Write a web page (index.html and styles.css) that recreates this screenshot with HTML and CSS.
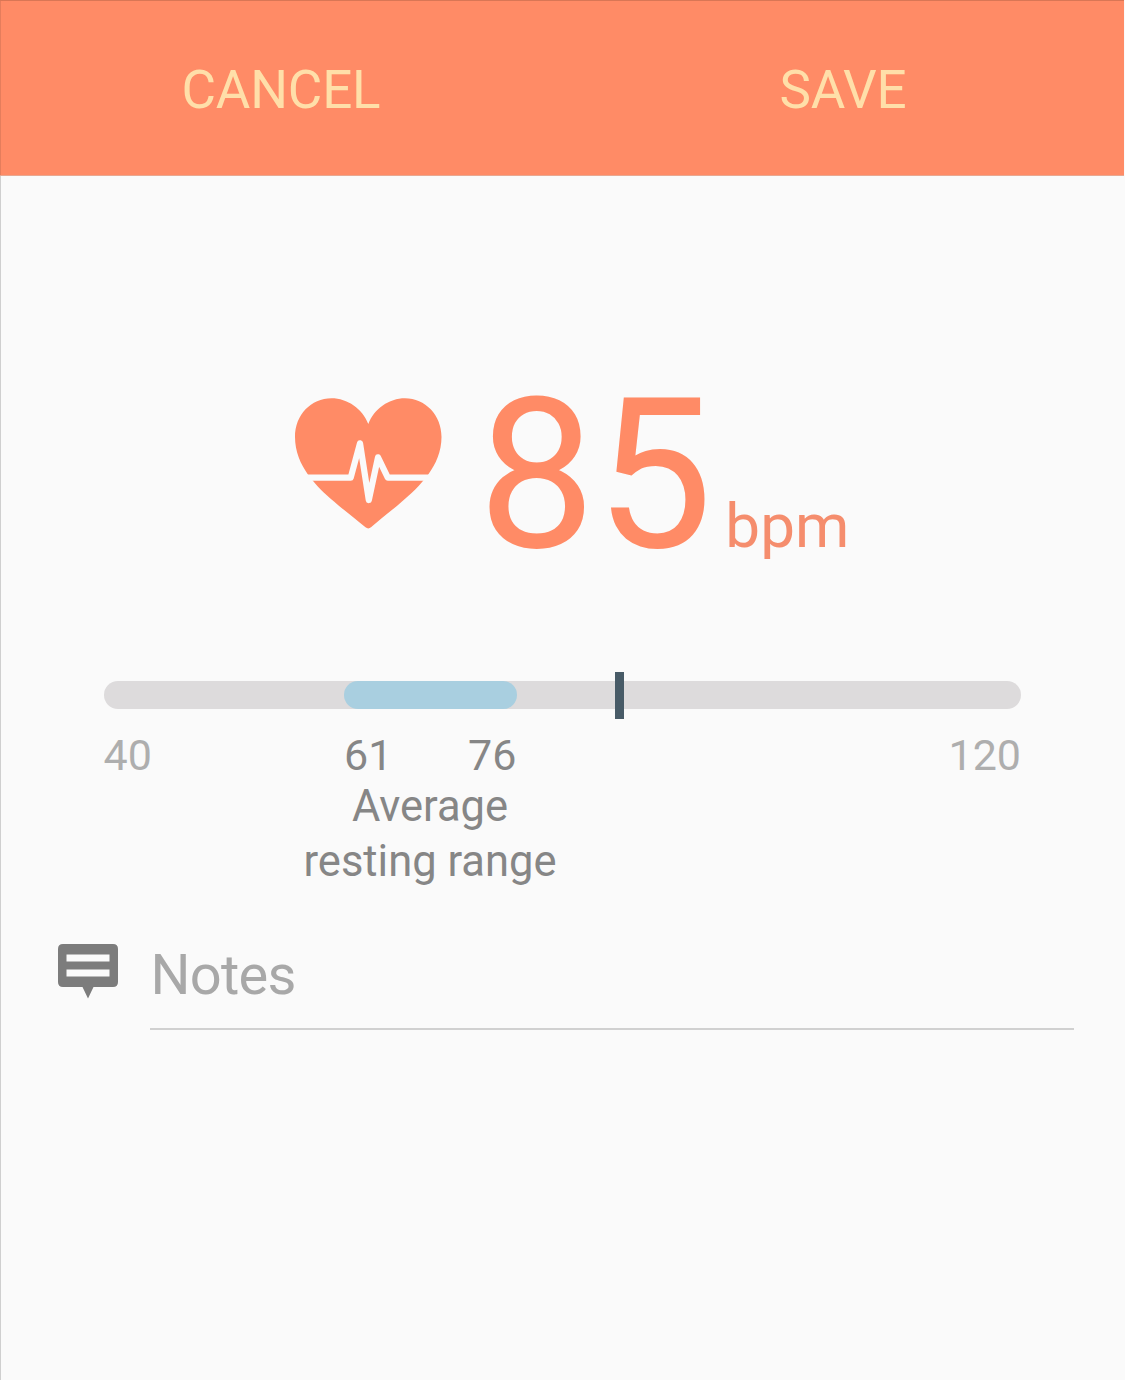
FILE: index.html
```html
<!DOCTYPE html>
<html lang="en">
<head>
<meta charset="utf-8">
<title>Heart rate</title>
<link rel="stylesheet" href="styles.css">
</head>
<body>
<div class="screen">
  <header class="actions">
    <button class="action cancel">CANCEL</button>
    <button class="action save">SAVE</button>
  </header>
  <main>
    <section class="reading">
      <svg class="heart" viewBox="0 0 180 160" width="180" height="160">
        <path fill="#ff8b66" d="M88.300 44C94 29 109 18.300 125 18.300C145 18.300 161.500 35 161.500 57C161.500 86 139 107 122 121.500C110 132 99 140 91 147.300Q88.300 149.500 85.500 147.300C77 140 66 132 54 121.500C37 107 15 86 15 57C15 35 31 18.300 51.500 18.300C67.500 18.300 82.500 29 88.300 44Z"/>
        <path fill="none" stroke="#fafafa" stroke-width="6.200" stroke-linejoin="round" d="M20 97.700H70.700L80 63.300L88.800 120L98 77.300L107.800 97.700H158"/>
      </svg>
      <span class="value">85</span>
      <span class="unit">bpm</span>
    </section>
    <section class="range">
      <div class="track"><div class="resting"></div><div class="marker"></div></div>
      <div class="labels">
        <span class="min">40</span>
        <span class="low">61</span>
        <span class="high">76</span>
        <span class="max">120</span>
      </div>
      <p class="caption">Average<br>resting range</p>
    </section>
    <section class="notes">
      <svg class="comment" viewBox="0 0 60 55" width="60" height="55">
        <path fill="#7c7c7c" fill-rule="evenodd" d="M5 0H55Q60 0 60 5V38Q60 43 55 43H35.500L30 54.500L24.500 43H5Q0 43 0 38V5Q0 0 5 0ZM8.500 10.500V17.500H51.500V10.500ZM8.500 25.500V32.500H51.500V25.500Z"/>
      </svg>
      <div class="field">Notes</div>
    </section>
  </main>
</div>
</body>
</html>
```
FILE: styles.css
```css
* { box-sizing: border-box; }
body {
  margin: 0;
  background: #fafafa;
  font-family: Roboto, "Liberation Sans", sans-serif;
}
.screen {
  width: 1124px;
  height: 1380px;
}
.actions {
  display: grid;
  grid-template-columns: 1fr 1fr;
  height: 176px;
  padding-top: 4px;
  background: #ff8b66;
  border-top: 1px solid #d97655;
  border-bottom: 1px solid #e8a891;
  box-shadow: inset 1px 0 #e57d5c;
}
.action {
  padding: 0;
  border: 0;
  background: none;
  color: #ffdfa9;
  font: 400 53px/62px Roboto, "Liberation Sans", sans-serif;
  letter-spacing: -0.2px;
}
main {
  height: 1204px;
  border-left: 1px solid #cfcfcf;
  overflow: hidden;
}
.reading {
  display: flex;
  align-items: baseline;
  height: 190px;
  margin-top: 204px;
  padding-left: 279px;
  color: #ff8b66;
}
.heart {
  flex: none;
  align-self: flex-start;
}
.value {
  margin-left: 18px;
  font-size: 209px;
  line-height: 192px;
  letter-spacing: -0.3px;
}
.unit {
  margin-left: 13px;
  font-size: 62px;
  line-height: 72px;
  color: #f58d6d;
}
.range {
  width: 917px;
  margin: 101px 0 0 103px;
}
.track {
  position: relative;
  display: flex;
  align-items: center;
  height: 48px;
}
.track::before {
  content: "";
  width: 100%;
  height: 28px;
  border-radius: 14px;
  background: #dddbdc;
}
.resting {
  position: absolute;
  left: 240px;
  width: 172.5px;
  height: 28px;
  border-radius: 14px;
  background: #a9cfe0;
}
.marker {
  position: absolute;
  top: 0.5px;
  left: 510.5px;
  width: 9.5px;
  height: 47px;
  background: #485b67;
}
.labels {
  display: flex;
  height: 50px;
  margin-top: 11px;
  font-size: 43px;
  line-height: 50px;
  color: #868686;
}
.min, .max { color: #aeaeae; }
.min { width: 240.5px; margin-left: -0.5px; }
.low { width: 124px; }
.max { margin-left: auto; }
.caption {
  width: 300px;
  margin: -1px 0 0 176px;
  font-size: 43.5px;
  line-height: 55px;
  text-align: center;
  color: #868686;
}
.notes {
  display: flex;
  margin: 55px 50px 0 56.5px;
}
.comment { flex: none; }
.field {
  flex: 1;
  height: 86px;
  margin-left: 32.5px;
  padding-left: 0.5px;
  border-bottom: 2px solid #d0d0d0;
  font-size: 56px;
  line-height: 62px;
  letter-spacing: -0.7px;
  color: #a8a8a8;
}
```
